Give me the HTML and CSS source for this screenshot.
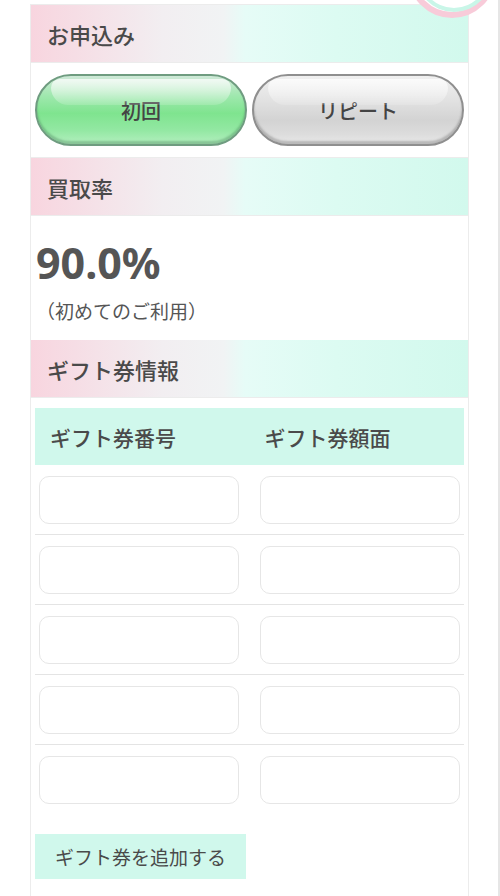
FILE: index.html
```html
<!doctype html>
<html lang="ja">
  <head>
    <meta charset="UTF-8" />
    <meta name="viewport" content="width=device-width, initial-scale=1.0" />
    <title>お申込み</title>
    <link rel="stylesheet" href="styles.css">
  </head>
  <body>
    <div class="page">
      <div class="deco">
        <span class="ring-pink"></span>
        <span class="ring-mint"></span>
      </div>
      <main class="card">
        <h2 class="sec-title">お申込み</h2>
        <div class="type-select">
          <button type="button" class="pill pill-green">初回</button>
          <button type="button" class="pill pill-gray">リピート</button>
        </div>

        <h2 class="sec-title">買取率</h2>
        <div class="rate">
          <p class="rate-value">90.0%</p>
          <p class="rate-note">（初めてのご利用）</p>
        </div>

        <h2 class="sec-title">ギフト券情報</h2>
        <div class="gift">
          <div class="gift-head">
            <span>ギフト券番号</span>
            <span>ギフト券額面</span>
          </div>
          <div class="gift-row">
            <input type="text" class="field">
            <input type="text" class="field">
          </div>
          <div class="gift-row">
            <input type="text" class="field">
            <input type="text" class="field">
          </div>
          <div class="gift-row">
            <input type="text" class="field">
            <input type="text" class="field">
          </div>
          <div class="gift-row">
            <input type="text" class="field">
            <input type="text" class="field">
          </div>
          <div class="gift-row">
            <input type="text" class="field">
            <input type="text" class="field">
          </div>
          <button type="button" class="add-btn">ギフト券を追加する</button>
        </div>
      </main>
    </div>
  </body>
</html>
```

FILE: styles.css
```css
* {
    box-sizing: border-box;
    margin: 0;
    padding: 0;
}

body {
    font-family: "Noto Sans CJK JP", "Noto Sans", sans-serif;
    color: #4e4e4e;
    background-color: #fff;
    overflow: hidden;
}

.page {
    position: relative;
    width: 500px;
    height: 896px;
    padding-top: 4px;
    border-right: 2px solid #e6e6e6;
    overflow: hidden;
}

.card {
    margin-left: 30px;
    width: 439px;
    min-height: 900px;
    border: 1px solid #ececec;
    border-bottom: none;
    background-color: #fff;
}

.sec-title {
    height: 58px;
    display: flex;
    align-items: center;
    padding-left: 16px;
    font-size: 22px;
    font-weight: 500;
    color: #4a4a4a;
    background: linear-gradient(to right, #f8d5df 0%, #f2eef1 30%, #f1f3f4 44%, #e6fcf7 49%, #dcfbf2 70%, #d2f9ed 100%);
    border-bottom: 1px solid #ececec;
}

.type-select {
    display: flex;
    gap: 5px;
    padding: 11px 4px 11px 4px;
    border-bottom: 1px solid #ececec;
}

.pill {
    position: relative;
    flex: 1;
    height: 72px;
    border-radius: 36px;
    font-family: inherit;
    font-size: 20px;
    font-weight: 500;
    color: #444;
    cursor: pointer;
    overflow: hidden;
}

.pill::before {
    content: "";
    position: absolute;
    left: 14px;
    right: 14px;
    top: 3px;
    height: 26px;
    border-radius: 20px 20px 40px 40px;
    background: linear-gradient(to bottom, rgba(255, 255, 255, 0.75), rgba(255, 255, 255, 0.15));
}

.pill-green {
    border: 2px solid #6f9c80;
    background: linear-gradient(to bottom, #cfe9d8 0%, #9ee8ad 30%, #7fe48f 55%, #93e8a3 80%, #b4efbf 100%);
    box-shadow: inset 0 -3px 2px rgba(60, 120, 80, 0.35);
}

.pill-gray {
    border: 2px solid #8f8f8f;
    background: linear-gradient(to bottom, #f0f0f0 0%, #e2e2e2 35%, #d3d3d3 65%, #dcdcdc 85%, #e8e8e8 100%);
    box-shadow: inset 0 -3px 2px rgba(80, 80, 80, 0.3);
}

.rate {
    padding: 20px 5px 16px;
}

.rate-value {
    font-family: "Noto Sans", sans-serif;
    font-size: 43px;
    font-weight: 700;
    line-height: 54px;
    color: #555;
}

.rate-note {
    margin-top: 8px;
    font-size: 19px;
    line-height: 26px;
    color: #555;
}

.gift {
    padding: 10px 4px 20px;
}

.gift-head {
    display: grid;
    grid-template-columns: 1fr 1fr;
    height: 57px;
    align-items: center;
    background-color: #d0f8ec;
    font-size: 21px;
    font-weight: 500;
    color: #4a4a4a;
}

.gift-head span {
    padding-left: 15px;
}

.gift-row {
    display: grid;
    grid-template-columns: 200px 200px;
    justify-content: space-between;
    padding: 11px 4px 10px;
    border-bottom: 1px solid #e4e4e4;
}

.gift-row:last-of-type {
    border-bottom: none;
}

.field {
    height: 48px;
    border: 1px solid #e6e6e6;
    border-radius: 10px;
    background-color: #fff;
    outline: none;
}

.add-btn {
    margin-top: 20px;
    width: 211px;
    height: 45px;
    border: none;
    background-color: #d0f8ec;
    font-family: inherit;
    font-size: 19px;
    color: #4a4a4a;
}

.deco {
    position: absolute;
    top: 0;
    left: 0;
}

.ring-pink {
    position: absolute;
    left: 408px;
    top: -70px;
    width: 88px;
    height: 88px;
    border-radius: 50%;
    border: 6px solid #f8cbd9;
    background-color: #fff;
}

.ring-mint {
    position: absolute;
    left: 414px;
    top: -74px;
    width: 80px;
    height: 86px;
    border-radius: 50%;
    border: 4px solid #c9f6e8;
    background-color: #fff;
}
```
